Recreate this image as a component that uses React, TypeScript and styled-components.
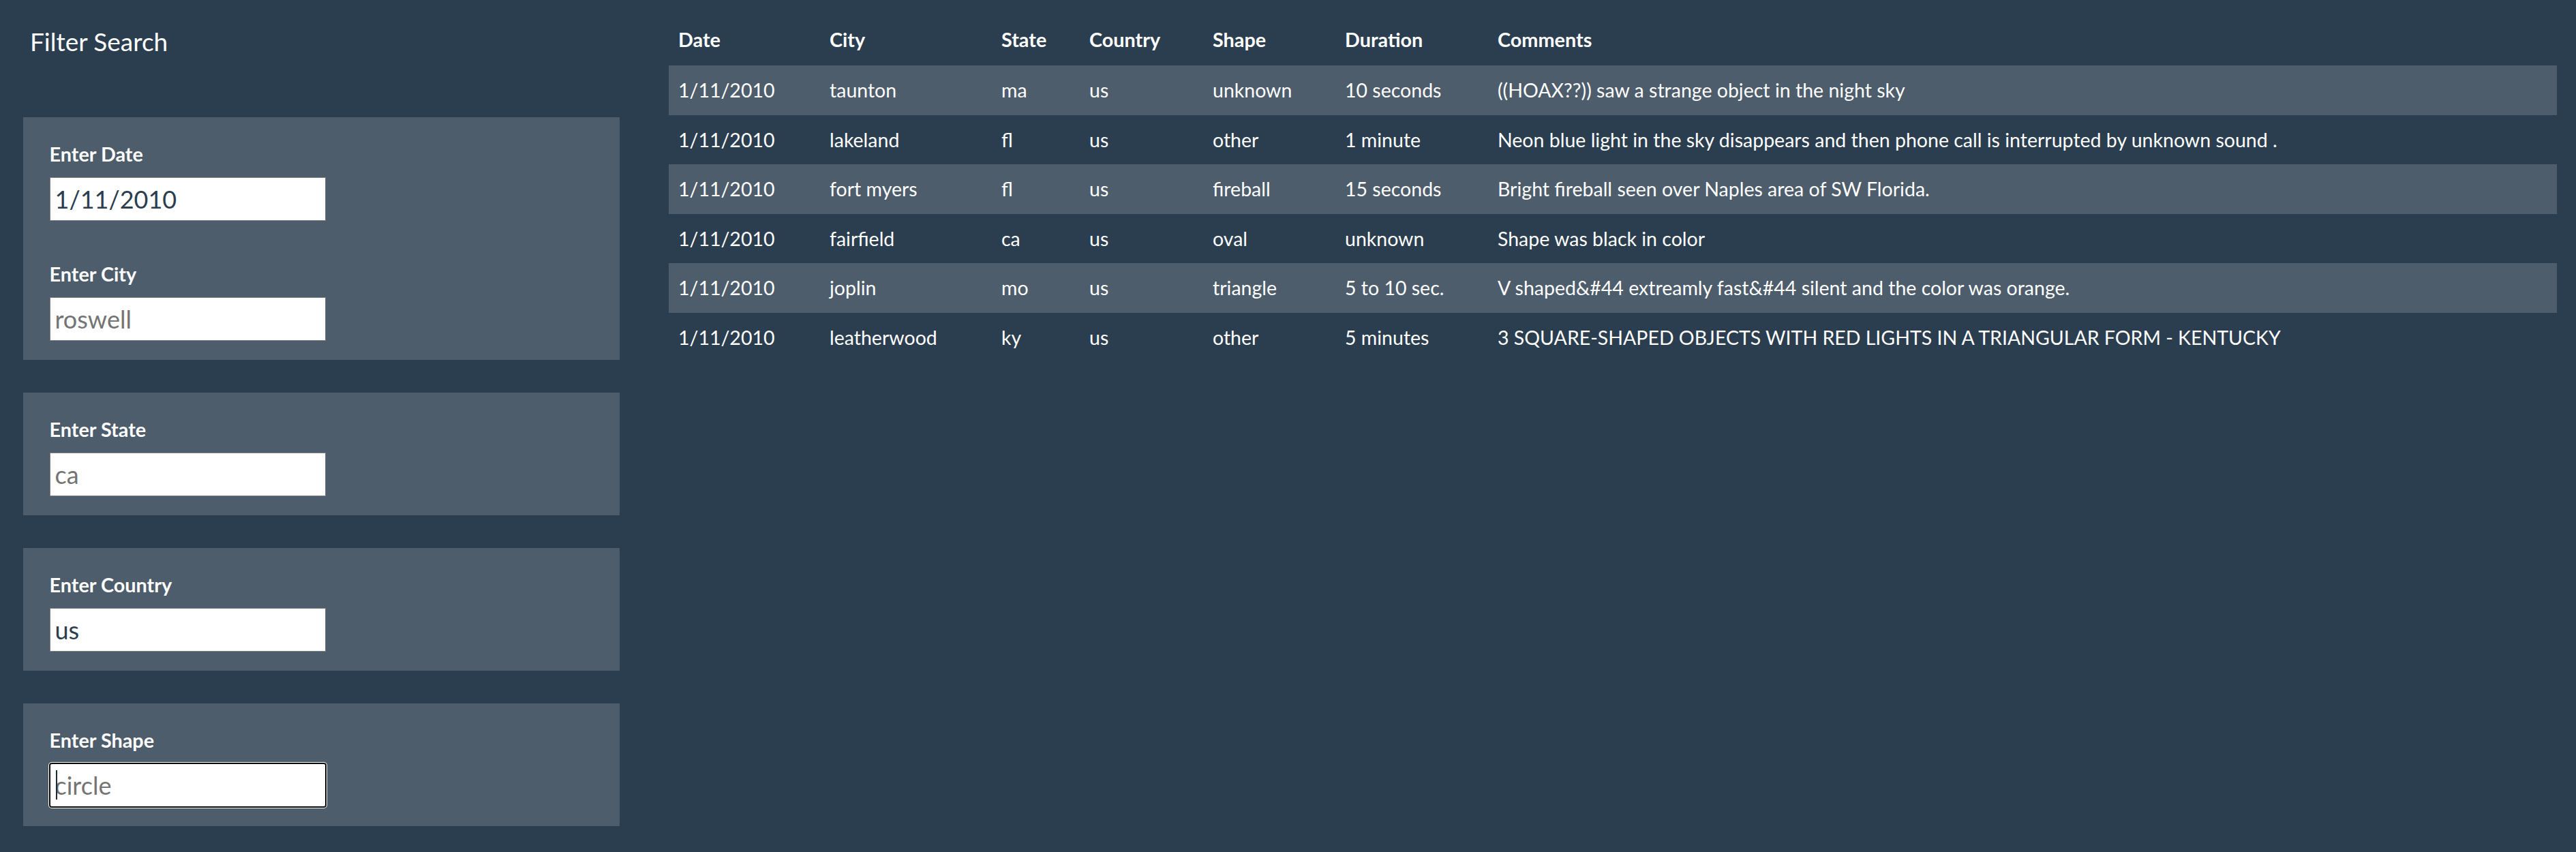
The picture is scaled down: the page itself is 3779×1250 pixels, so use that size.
import React from "react";
import styled, { createGlobalStyle } from "styled-components";

const GlobalStyle = createGlobalStyle`
  html, body {
    margin: 0;
    padding: 0;
    background: #2b3e50;
  }
  body {
    font-family: Lato, "Open Sans", "Liberation Sans", sans-serif;
    color: #ebebeb;
  }
  * { box-sizing: border-box; }
`;

const Page = styled.div`
  display: flex;
  align-items: flex-start;
  gap: 72px;
  min-height: 1250px;
  padding: 0 28px 0 34px;
  background: #2b3e50;
`;

const Sidebar = styled.aside`
  width: 875px;
  flex: none;
  display: flex;
  flex-direction: column;
`;

const Title = styled.h4`
  margin: 39px 0 89px 0;
  padding-left: 10px;
  font-size: 37px;
  line-height: 44px;
  font-weight: 400;
  color: #ffffff;
`;

const Panels = styled.div`
  display: flex;
  flex-direction: column;
  gap: 48.5px;
`;

const Panel = styled.div`
  background: #4e5d6c;
  padding: 33.25px 38px 27.25px 38.5px;
  display: flex;
  flex-direction: column;
  gap: 57px;
`;

const Field = styled.div`
  display: flex;
  flex-direction: column;
  gap: 13px;
`;

const Label = styled.label`
  font-size: 28.8px;
  line-height: 42px;
  font-weight: 700;
  color: #ffffff;
`;

const InputWrap = styled.div`
  position: relative;
  width: 405px;
  height: 64px;
`;

const Input = styled.input<{ $focused?: boolean }>`
  display: block;
  width: 405px;
  height: 64px;
  margin: 0;
  padding: 0 7px;
  font-family: Lato, "Open Sans", "Liberation Sans", sans-serif;
  font-size: 36px;
  color: #2b3e50;
  background: #ffffff;
  border: 1px solid ${(p) => (p.$focused ? "#0a0a0a" : "#808080")};
  border-radius: ${(p) => (p.$focused ? "3px" : "0")};
  box-shadow: ${(p) => (p.$focused ? "0 0 0 1px #0a0a0a, 0 0 0 2px #ffffff" : "none")};
  outline: none;
  &::placeholder {
    color: #747474;
    opacity: 1;
  }
`;

const Caret = styled.span`
  position: absolute;
  left: 9px;
  top: 10px;
  width: 2.5px;
  height: 43px;
  background: #1c2b3b;
  pointer-events: none;
`;

const TableArea = styled.section`
  flex: 1;
  padding-top: 22px;
`;

const Table = styled.table`
  width: 2770px;
  border-collapse: collapse;
  table-layout: fixed;
  font-size: 28.5px;
  line-height: 42px;
  color: #ffffff;
`;

const Col = styled.col<{ $w: number }>`
  width: ${(p) => p.$w}px;
`;

const HeadCell = styled.th`
  text-align: left;
  font-weight: 700;
  font-size: 28.8px;
  padding: 15px 14px 17px 14px;
  white-space: nowrap;
`;

const Row = styled.tr<{ $striped: boolean }>`
  background: ${(p) => (p.$striped ? "#4e5d6c" : "transparent")};
`;

const Cell = styled.td`
  padding: 15.25px 14px;
  font-weight: 400;
  white-space: nowrap;
`;

const columns: { key: string; label: string; w: number }[] = [
  { key: "date", label: "Date", w: 222 },
  { key: "city", label: "City", w: 252 },
  { key: "state", label: "State", w: 129 },
  { key: "country", label: "Country", w: 181 },
  { key: "shape", label: "Shape", w: 194 },
  { key: "duration", label: "Duration", w: 224 },
  { key: "comments", label: "Comments", w: 1568 },
];

const rows: string[][] = [
  ["1/11/2010", "taunton", "ma", "us", "unknown", "10 seconds", "((HOAX??)) saw a strange object in the night sky"],
  ["1/11/2010", "lakeland", "fl", "us", "other", "1 minute", "Neon blue light in the sky disappears and then phone call is interrupted by unknown sound ."],
  ["1/11/2010", "fort myers", "fl", "us", "fireball", "15 seconds", "Bright fireball seen over Naples area of SW Florida."],
  ["1/11/2010", "fairfield", "ca", "us", "oval", "unknown", "Shape was black in color"],
  ["1/11/2010", "joplin", "mo", "us", "triangle", "5 to 10 sec.", "V shaped&#44 extreamly fast&#44 silent and the color was orange."],
  ["1/11/2010", "leatherwood", "ky", "us", "other", "5 minutes", "3 SQUARE-SHAPED OBJECTS WITH RED LIGHTS IN A TRIANGULAR FORM - KENTUCKY"],
];

type FieldDef = { id: string; label: string; value?: string; placeholder?: string; focused?: boolean };

const panels: FieldDef[][] = [
  [
    { id: "datetime", label: "Enter Date", value: "1/11/2010" },
    { id: "city", label: "Enter City", placeholder: "roswell" },
  ],
  [{ id: "state", label: "Enter State", placeholder: "ca" }],
  [{ id: "country", label: "Enter Country", value: "us" }],
  [{ id: "shape", label: "Enter Shape", placeholder: "circle", focused: true }],
];

export default function App() {
  return (
    <>
      <GlobalStyle />
      <Page>
        <Sidebar>
          <Title>Filter Search</Title>
          <Panels>
            {panels.map((group, i) => (
              <Panel key={i}>
                {group.map((f) => (
                  <Field key={f.id}>
                    <Label htmlFor={f.id}>{f.label}</Label>
                    <InputWrap>
                      <Input
                        id={f.id}
                        type="text"
                        defaultValue={f.value}
                        placeholder={f.placeholder}
                        $focused={f.focused}
                      />
                      {f.focused && <Caret />}
                    </InputWrap>
                  </Field>
                ))}
              </Panel>
            ))}
          </Panels>
        </Sidebar>
        <TableArea>
          <Table>
            <colgroup>
              {columns.map((c) => (
                <Col key={c.key} $w={c.w} />
              ))}
            </colgroup>
            <thead>
              <tr>
                {columns.map((c) => (
                  <HeadCell key={c.key}>{c.label}</HeadCell>
                ))}
              </tr>
            </thead>
            <tbody>
              {rows.map((r, i) => (
                <Row key={i} $striped={i % 2 === 0}>
                  {r.map((v, j) => (
                    <Cell key={j}>{v}</Cell>
                  ))}
                </Row>
              ))}
            </tbody>
          </Table>
        </TableArea>
      </Page>
    </>
  );
}
